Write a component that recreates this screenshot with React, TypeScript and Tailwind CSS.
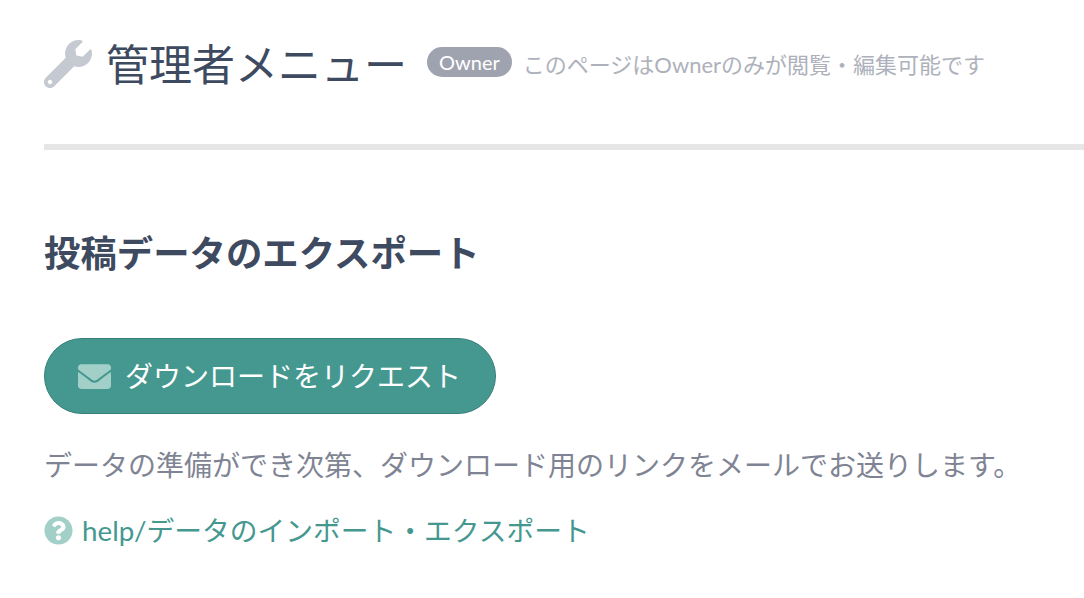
import { FaEnvelope, FaQuestionCircle, FaWrench } from "react-icons/fa";

const JP = "font-['Lato','Noto_Sans_CJK_JP',sans-serif]";

export default function App() {
  return (
    <div className={`${JP} bg-white w-[1084px] h-[598px] overflow-hidden pl-[44px] pt-[38px]`}>
      <div className="flex items-center h-[52px]">
        <FaWrench className="w-[48px] h-[48px] mr-[14px] shrink-0 text-[#c5c9d1] -scale-y-100 -rotate-90" />
        <h1 className="text-[43px] text-[#3d4a60] font-normal leading-none mr-[20px]">管理者メニュー</h1>
        <span className="bg-[#9fa3b0] text-white text-[20px] rounded-full px-[12px] h-[30px] flex items-center mr-[11px] -mt-[4px]">Owner</span>
        <span className="text-[22px] text-[#aeb1bb]">このページはOwnerのみが閲覧・編集可能です</span>
      </div>
      <div className="h-[6px] bg-[#e6e6e6] mt-[54px]" />
      <h2 className="text-[36.4px] font-bold text-[#3d4a60] mt-[81px] leading-[44px]">投稿データのエクスポート</h2>
      <button className="mt-[63px] w-[452px] h-[76px] rounded-full bg-[#459890] border border-[#367f77] text-white text-[28px] flex items-center pl-[33px]">
        <FaEnvelope className="w-[33px] h-[33px] mr-[14px] text-[#a3cfc9]" />
        ダウンロードをリクエスト
      </button>
      <p className="text-[28px] text-[#7f8494] mt-[31px] leading-[40px]">データの準備ができ次第、ダウンロード用のリンクをメールでお送りします。</p>
      <div className="flex items-center mt-[25px]">
        <FaQuestionCircle className="w-[29px] h-[29px] mr-[9px] text-[#a3cfc9]" />
        <a className="text-[27.75px] text-[#459890]">help/データのインポート・エクスポート</a>
      </div>
    </div>
  );
}
